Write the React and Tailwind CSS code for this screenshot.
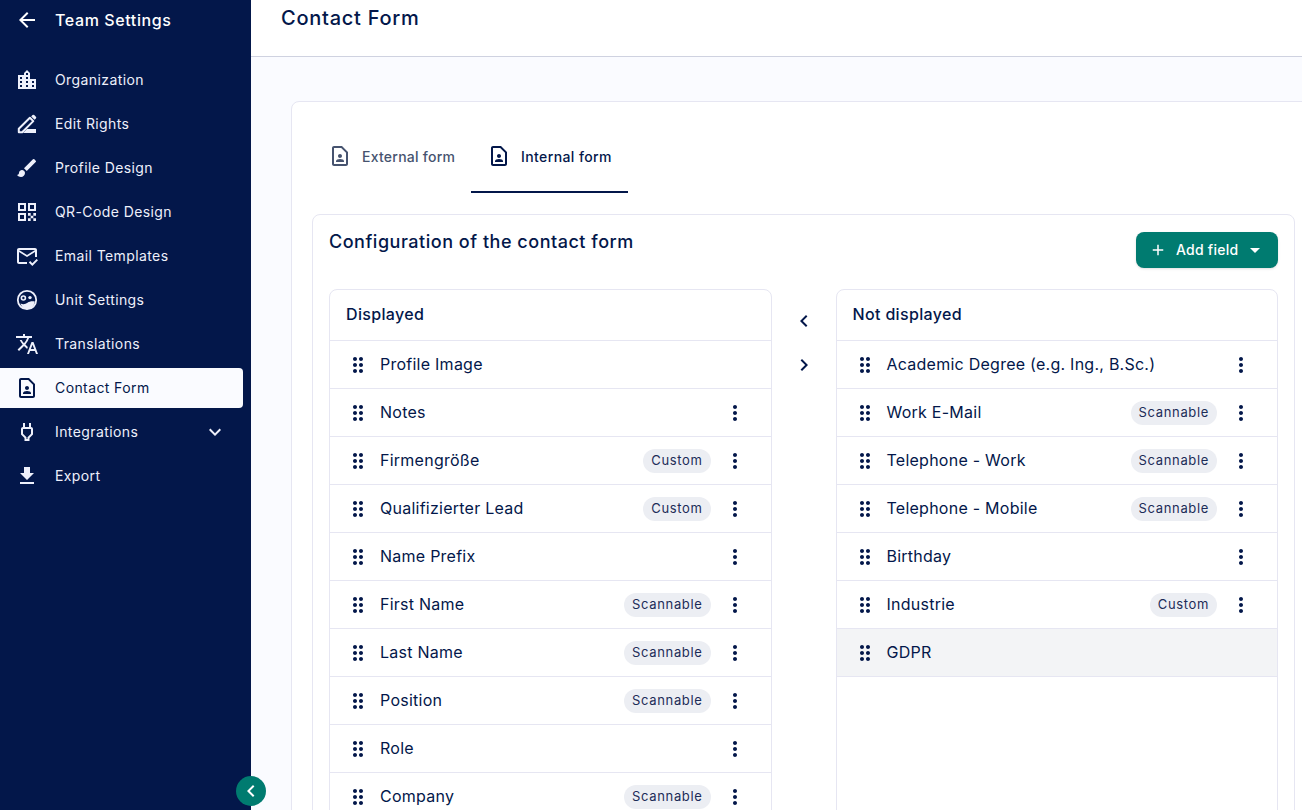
import React from 'react';
import {
  MdArrowBack, MdLocationCity, MdBrush, MdOutlineMarkEmailRead,
  MdTranslate, MdOutlineContactPage, MdOutlinePower, MdFileDownload,
  MdExpandMore, MdDragIndicator, MdMoreVert, MdAdd, MdArrowDropDown, MdChevronLeft, MdChevronRight,
} from 'react-icons/md';

const PenIcon = ({ className }) => (
  <svg viewBox="0 0 24 24" fill="none" className={className}>
    <path d="M3.800 20.200v-3.400L14.900 5.700l3.400 3.400L7.200 20.200H3.800z" stroke="currentColor" strokeWidth="2" strokeLinejoin="round" />
    <path d="M16.200 4.400l1.300-1.300a1.200 1.200 0 0 1 1.700 0l1.700 1.700a1.200 1.200 0 0 1 0 1.700l-1.300 1.300-3.400-3.400z" fill="currentColor" />
    <path d="M12 17h9v4h-13z" fill="currentColor" />
  </svg>
);

const QrIcon = ({ className }) => (
  <svg viewBox="0 0 24 24" fill="currentColor" className={className}>
    <path fillRule="evenodd" d="M3 3h8v8H3V3zm2 2v4h4V5H5zM13 3h8v8h-8V3zm2 2v4h4V5h-4zM3 13h8v8H3v-8zm2 2v4h4v-4H5z" />
    <path d="M13 13h2.67v2.67H13zM18.33 13H21v2.67h-2.67zM15.67 15.67h2.66v2.66h-2.66zM13 18.33h2.67V21H13zM18.33 18.33H21V21h-2.67z" />
  </svg>
);

const UnitIcon = ({ className }) => (
  <svg viewBox="0 0 24 24" fill="none" className={className}>
    <circle cx="12" cy="12" r="9.2" stroke="currentColor" strokeWidth="1.8" />
    <circle cx="8.4" cy="10" r="2" stroke="currentColor" strokeWidth="1.6" />
    <circle cx="15" cy="9.6" r="1.7" fill="currentColor" />
    <path d="M5.5 15.500c2.500 1.200 5 .8 7-.7 1.800-1.300 4.300-1.800 7.300-1.300-.4 4.400-4 7.700-8 7.700-2.800 0-5-2-6.300-5.700z" fill="currentColor" />
  </svg>
);

const navItems = [
  { label: 'Organization', icon: MdLocationCity },
  { label: 'Edit Rights', icon: PenIcon },
  { label: 'Profile Design', icon: MdBrush },
  { label: 'QR-Code Design', icon: QrIcon },
  { label: 'Email Templates', icon: MdOutlineMarkEmailRead },
  { label: 'Unit Settings', icon: UnitIcon },
  { label: 'Translations', icon: MdTranslate },
  { label: 'Contact Form', icon: MdOutlineContactPage, active: true },
  { label: 'Integrations', icon: MdOutlinePower, expand: true },
  { label: 'Export', icon: MdFileDownload },
];

const displayed = [
  { label: 'Profile Image', noMenu: true },
  { label: 'Notes' },
  { label: 'Firmengröße', badge: 'Custom' },
  { label: 'Qualifizierter Lead', badge: 'Custom' },
  { label: 'Name Prefix' },
  { label: 'First Name', badge: 'Scannable' },
  { label: 'Last Name', badge: 'Scannable' },
  { label: 'Position', badge: 'Scannable' },
  { label: 'Role' },
  { label: 'Company', badge: 'Scannable' },
];

const notDisplayed = [
  { label: 'Academic Degree (e.g. Ing., B.Sc.)' },
  { label: 'Work E-Mail', badge: 'Scannable' },
  { label: 'Telephone - Work', badge: 'Scannable' },
  { label: 'Telephone - Mobile', badge: 'Scannable' },
  { label: 'Birthday' },
  { label: 'Industrie', badge: 'Custom' },
  { label: 'GDPR', noMenu: true, highlight: true },
];

const FieldRow = ({ field }) => (
  <div className={`flex h-12 shrink-0 items-center border-t border-[#e6e6f2] pl-[16px] pr-[24px] ${field.highlight ? 'bg-[#f3f4f6]' : ''}`}>
    <MdDragIndicator className="h-6 w-6 shrink-0 text-[#03174a]" />
    <span className="ml-[10px] grow pb-[2px] text-[16px] tracking-[0.25px] text-[#03174a]">{field.label}</span>
    {field.badge && (
      <span className="mr-[12px] flex h-6 items-center rounded-full bg-[#eceef3] px-[8px] pt-[1px] text-[13px] tracking-[0.65px] text-[#1c2c58]">
        {field.badge}
      </span>
    )}
    {!field.noMenu && <MdMoreVert className="h-6 w-6 shrink-0 text-[#03174a]" />}
  </div>
);

const FieldList = ({ title, fields }) => (
  <div className="flex h-[600px] w-[443px] flex-col rounded-t-lg border border-[#e6e6f2]">
    <div className="flex h-[50px] shrink-0 items-center px-4 pb-[2px] text-[16px] font-medium tracking-[0.35px] text-[#03174a]">{title}</div>
    {fields.map((field) => <FieldRow key={field.label} field={field} />)}
    {fields.length < 10 && <div className="border-t border-[#e6e6f2]" />}
  </div>
);

const App = () => {
  return (
    <div className="relative flex h-[810px] w-[1302px] overflow-hidden bg-[#fafbff] font-['Inter','Liberation_Sans',sans-serif]">
      {/* Sidebar */}
      <aside className="flex w-[251px] shrink-0 flex-col bg-[#03174a] pr-2 text-[#eef0fb]">
        <div className="flex h-[40px] items-center pl-[15px] text-white">
          <MdArrowBack className="h-6 w-6" />
          <span className="ml-[16px] text-[16px] font-medium tracking-[0.6px]">Team Settings</span>
        </div>
        <nav className="mt-[20px] flex flex-col gap-1">
          {navItems.map(({ label, icon: Icon, active, expand }) => (
            <div
              key={label}
              className={`flex h-10 items-center pl-[15px] pr-[16px] text-[14px] tracking-[0.4px] ${active ? 'rounded-r bg-[#fafbff] text-[#03174a]' : ''}`}
            >
              <Icon className="h-6 w-6 shrink-0" />
              <span className="ml-[16px] grow pb-[1px]">{label}</span>
              {expand && <MdExpandMore className="h-6 w-6" />}
            </div>
          ))}
        </nav>
      </aside>

      {/* Collapse button */}
      <div className="absolute left-[236px] top-[776px] flex h-[30px] w-[30px] items-center justify-center rounded-full bg-[#007b70] text-white">
        <MdChevronLeft className="h-6 w-6" />
      </div>

      {/* Main */}
      <main className="flex min-w-0 grow flex-col">
        <header className="flex h-[57px] shrink-0 items-start border-b border-[#cfd2e0] bg-white pl-[30px] pt-[4px]">
          <h1 className="text-[20px] font-medium leading-[28px] tracking-[0.75px] text-[#03174a]">Contact Form</h1>
        </header>

        <div className="pl-[40px] pt-[44px]">
          <section className="h-[720px] w-[1030px] rounded-t-lg border border-[#e6e6f2] bg-white pl-[20px]">
            {/* Tabs */}
            <div className="flex h-[91px] items-start pt-[18px]">
              <div className="flex h-[73px] w-[159px] items-center border-b-2 border-transparent pl-[16px] text-[14px] font-medium tracking-[0.25px] text-[#46536f]">
                <MdOutlineContactPage className="h-6 w-6" />
                <span className="ml-[10px] pt-[1px]">External form</span>
              </div>
              <div className="flex h-[73px] w-[157px] items-center border-b-2 border-[#03174a] pl-[16px] text-[14px] font-medium tracking-[0.4px] text-[#03174a]">
                <MdOutlineContactPage className="h-6 w-6" />
                <span className="ml-[10px] pt-[1px]">Internal form</span>
              </div>
            </div>

            {/* Configuration */}
            <div className="mt-[21px] h-[620px] w-[983px] rounded-t-lg border border-[#e6e6f2] px-4">
              <div className="flex h-[74px] items-start justify-between">
                <h2 className="mt-[13px] text-[18px] font-medium tracking-[0.52px] text-[#03174a]">Configuration of the contact form</h2>
                <button className="mt-[17px] flex h-9 w-[142px] items-center rounded-lg bg-[#007b70] pl-[13px] text-[14px] font-medium tracking-[0.25px] text-white shadow-sm">
                  <MdAdd className="h-[18px] w-[18px]" />
                  <span className="ml-[9px] pb-[1px]">Add field</span>
                  <MdArrowDropDown className="ml-[5px] h-6 w-6" />
                </button>
              </div>
              <div className="flex items-start">
                <FieldList title="Displayed" fields={displayed} />
                <div className="flex w-[64px] shrink-0 flex-col items-center gap-5 pt-[20px] text-[#03174a]">
                  <MdChevronLeft className="h-6 w-6" />
                  <MdChevronRight className="h-6 w-6" />
                </div>
                <FieldList title="Not displayed" fields={notDisplayed} />
              </div>
            </div>
          </section>
        </div>
      </main>
    </div>
  );
};

export default App;
